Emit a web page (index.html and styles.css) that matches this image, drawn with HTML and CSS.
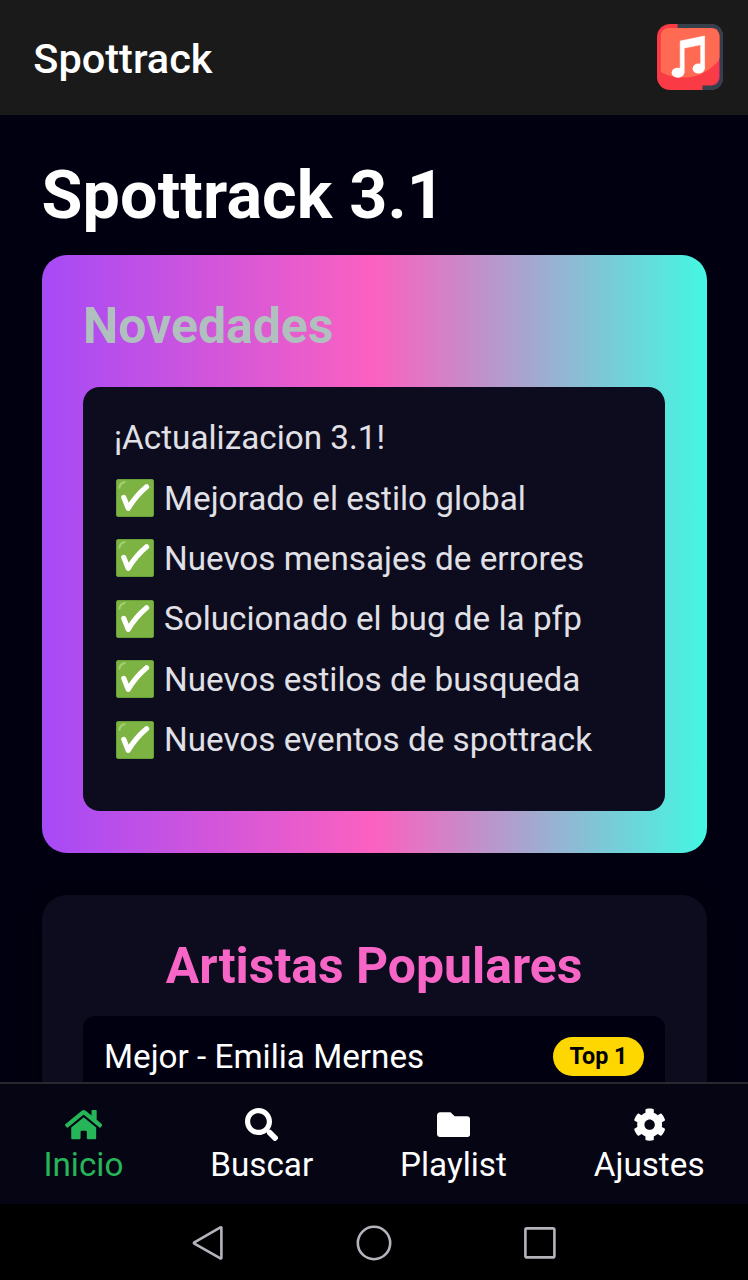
FILE: index.html
```html
<!DOCTYPE html>
<html lang="es">
<head>
<meta charset="utf-8">
<title>Spottrack</title>
<link rel="stylesheet" href="styles.css">
</head>
<body>
<svg class="defs" aria-hidden="true">
  <symbol id="check" viewBox="0 0 38 38">
    <rect x=".5" y=".5" width="37" height="37" rx="1.5" fill="#7cb342" stroke="#689f38"/>
    <path d="M3.4 8.6Q4 4.2 8.6 3" fill="none" stroke="#a5cf74" stroke-width="2.2" stroke-linecap="round"/>
    <path d="M7.8 18.4L12.2 29.4Q20 16.5 30.6 7.8" fill="none" stroke="#fff" stroke-width="5.2" stroke-linecap="round" stroke-linejoin="round"/>
  </symbol>
</svg>
<div class="screen">
  <header class="topbar">
    <span class="brand">Spottrack</span>
    <svg class="logo" viewBox="0 0 66 66">
      <defs><clipPath id="tile"><rect x="3.8" y="4" width="58.6" height="57.6" rx="8"/></clipPath></defs>
      <rect width="66" height="66" rx="13" fill="#fa3a45"/>
      <path d="M20.5 0H53Q66 0 66 13V53Q66 66 53 66H45.5V60H60V5H20.5z" fill="#36404d"/>
      <rect x="3" y="4" width="59.6" height="57.6" rx="9" fill="#fa3a45"/>
      <circle cx="26" cy="8" r="45.6" fill="#ff6a53" clip-path="url(#tile)"/>
      <path d="M62.5 34V52Q62.5 59 57 61" fill="none" stroke="#9c2f73"/>
      <path d="M23.2 17L47.6 12V45h-3.9V20.8L27.2 24V49h-4z" fill="#fff" stroke="#fff" stroke-width=".6"/>
      <ellipse cx="20.9" cy="48.8" rx="6.3" ry="5" fill="#fff"/>
      <ellipse cx="41.6" cy="44.6" rx="6" ry="5" fill="#fff"/>
    </svg>
  </header>

  <main class="content">
    <h1 class="title">Spottrack 3.1</h1>
    <section class="card news">
      <h2 class="news-title">Novedades</h2>
      <div class="panel">
        <p class="line intro">¡Actualizacion 3.1!</p>
        <p class="line"><svg class="check"><use href="#check"/></svg>Mejorado el estilo global</p>
        <p class="line"><svg class="check"><use href="#check"/></svg>Nuevos mensajes de errores</p>
        <p class="line"><svg class="check"><use href="#check"/></svg>Solucionado el bug de la pfp</p>
        <p class="line"><svg class="check"><use href="#check"/></svg>Nuevos estilos de busqueda</p>
        <p class="line"><svg class="check"><use href="#check"/></svg>Nuevos eventos de spottrack</p>
      </div>
    </section>
    <section class="card artists">
      <h2 class="artists-title">Artistas Populares</h2>
      <div class="artist"><span>Mejor - Emilia Mernes</span><span class="badge">Top 1</span></div>
    </section>
  </main>

  <nav class="tabs">
    <a class="tab active"><svg class="home" viewBox="0 0 576 512"><path d="M280.37 148.26L96 300.11V464a16 16 0 0 0 16 16l112.06-.29a16 16 0 0 0 15.92-16V368a16 16 0 0 1 16-16h64a16 16 0 0 1 16 16v95.64a16 16 0 0 0 16 16.05L464 480a16 16 0 0 0 16-16V300L295.67 148.26a12.19 12.19 0 0 0-15.3 0zM571.6 251.47L488 182.56V44.05a12 12 0 0 0-12-12h-56a12 12 0 0 0-12 12v72.61L318.47 43a48 48 0 0 0-61 0L4.34 251.47a12 12 0 0 0-1.6 16.9l25.5 31A12 12 0 0 0 45.15 301l235.22-193.74a12.19 12.19 0 0 1 15.3 0L530.9 301a12 12 0 0 0 16.9-1.6l25.5-31a12 12 0 0 0-1.7-16.93z"/></svg><span>Inicio</span></a>
    <a class="tab"><svg viewBox="0 0 512 512"><path d="M505 442.7L405.3 343c-4.5-4.5-10.6-7-17-7H372c27.6-35.3 44-79.7 44-128C416 93.1 322.9 0 208 0S0 93.1 0 208s93.1 208 208 208c48.3 0 92.7-16.4 128-44v16.3c0 6.4 2.5 12.5 7 17l99.7 99.7c9.4 9.4 24.6 9.4 33.9 0l28.3-28.3c9.4-9.4 9.4-24.6.1-34zM208 336c-70.7 0-128-57.2-128-128 0-70.7 57.2-128 128-128 70.7 0 128 57.2 128 128 0 70.7-57.2 128-128 128z"/></svg><span>Buscar</span></a>
    <a class="tab"><svg viewBox="0 0 512 512"><path d="M464 128H272l-64-64H48C21.49 64 0 85.49 0 112v288c0 26.51 21.49 48 48 48h416c26.51 0 48-21.49 48-48V176c0-26.51-21.49-48-48-48z"/></svg><span>Playlist</span></a>
    <a class="tab"><svg viewBox="0 0 512 512"><path d="M487.4 315.7l-42.6-24.6c4.3-23.2 4.3-47 0-70.2l42.6-24.6c4.9-2.8 7.1-8.6 5.5-14-11.1-35.6-30-67.8-54.7-94.6-3.8-4.1-10-5.1-14.8-2.3L380.8 110c-17.9-15.4-38.5-27.3-60.8-35.1V25.8c0-5.6-3.9-10.5-9.4-11.7-36.7-8.2-74.3-7.8-109.2 0-5.5 1.2-9.4 6.1-9.4 11.7V75c-22.2 7.9-42.8 19.8-60.8 35.1L88.7 85.5c-4.9-2.8-11-1.9-14.8 2.3-24.7 26.7-43.6 58.9-54.7 94.6-1.7 5.4.6 11.2 5.5 14L67.3 221c-4.3 23.2-4.3 47 0 70.2l-42.6 24.6c-4.9 2.8-7.1 8.6-5.5 14 11.1 35.6 30 67.8 54.7 94.6 3.8 4.1 10 5.1 14.8 2.3l42.6-24.6c17.9 15.4 38.5 27.3 60.8 35.1v49.2c0 5.6 3.9 10.5 9.4 11.7 36.7 8.2 74.3 7.8 109.2 0 5.5-1.2 9.4-6.1 9.4-11.7v-49.2c22.2-7.9 42.8-19.8 60.8-35.1l42.6 24.6c4.9 2.8 11 1.9 14.8-2.3 24.7-26.7 43.6-58.9 54.7-94.6 1.5-5.5-.7-11.3-5.6-14.1zM256 336c-44.1 0-80-35.9-80-80s35.9-80 80-80 80 35.9 80 80-35.9 80-80 80z"/></svg><span>Ajustes</span></a>
  </nav>

  <footer class="system">
    <svg viewBox="0 0 36 36"><path d="M31.4 2.6V33.2Q31.2 33.8 30.4 33.4L4.4 18.6Q3.4 18 4.4 17.4L30.4 2.4Q31.2 2 31.4 2.6z"/></svg>
    <svg viewBox="0 0 36 36"><circle cx="18" cy="18" r="16.2"/></svg>
    <svg viewBox="0 0 36 36"><rect x="3.4" y="3.4" width="29" height="29" rx="1.5"/></svg>
  </footer>
</div>
</body>
</html>
```

FILE: styles.css
```css
* { box-sizing: border-box; margin: 0; }

body {
  background: #000010;
  color: #fff;
  font-family: Roboto, "Liberation Sans", sans-serif;
  font-size: 33.25px;
}

svg { display: block; flex: none; }
.defs { display: none; }

.screen {
  display: flex;
  flex-direction: column;
  height: 1280px;
  overflow: hidden;
}

.topbar {
  display: flex;
  align-items: center;
  justify-content: space-between;
  flex: none;
  height: 115px;
  padding: 0 25.5px 0 33.25px;
  background: #1a1a1a;
}
.brand { padding-top: 2px; font-size: 41.5px; font-weight: 500; }
.logo { width: 66px; height: 66px; margin-bottom: 1px; }

.content {
  flex: 1;
  min-height: 0;
  overflow: hidden;
  padding: 40px 41.5px 0;
}
.title {
  margin-bottom: 20px;
  font-size: 66.5px;
  font-weight: 700;
  line-height: 80px;
  letter-spacing: .12px;
}

.card { padding: 41.5px; border-radius: 25px; }

.news {
  height: 598px;
  margin-bottom: 42px;
  background: linear-gradient(90deg, #a64af7, #fb61c0 50%, #43f7e2);
}
.news-title { margin-bottom: 32.5px; color: #b0c0bf; font-size: 49.9px; line-height: 58px; }
.panel {
  height: 424px;
  padding: 20.5px 32px;
  border-radius: 16.6px;
  background: #0c0c1e;
  color: #e0e0e6;
}
.line {
  display: flex;
  align-items: center;
  gap: 10px;
  height: 60.4px;
  white-space: nowrap;
}
.intro { margin-left: -1px; }
.check { width: 38px; height: 38px; margin-left: 1px; }

.artists {
  height: 400px;
  background: #0d0c1f;
  box-shadow: 0 8px 20px rgba(0, 0, 0, .4);
}
.artists-title {
  margin-bottom: 21.5px;
  color: #f766c6;
  font-size: 49.9px;
  line-height: 58px;
  text-align: center;
}
.artist {
  display: flex;
  align-items: center;
  justify-content: space-between;
  height: 81px;
  padding: 0 21px;
  border-radius: 12px;
  background: #000010;
}
.badge {
  padding: 0 16.6px;
  border-radius: 20px;
  background: #ffd700;
  color: #000;
  font-size: 23.3px;
  font-weight: 700;
  line-height: 39.5px;
}

.tabs {
  display: flex;
  justify-content: space-around;
  flex: none;
  height: 122px;
  padding-top: 23.5px;
  border-top: 2px solid #28282f;
  background: #060514;
}
.tab { display: flex; flex-direction: column; align-items: center; }
.tab svg { width: 33.25px; height: 33.25px; fill: currentColor; }
.tab .home { width: 37.4px; }
.tab span { margin-top: 4.25px; line-height: 39px; }
.active { color: #26b559; }

.system {
  display: flex;
  align-items: center;
  justify-content: center;
  gap: 130px;
  flex: none;
  height: 76px;
  padding-top: 1px;
  background: #000;
}
.system svg { width: 36px; height: 36px; fill: none; stroke: #b4b4bd; stroke-width: 2.6; }
```
